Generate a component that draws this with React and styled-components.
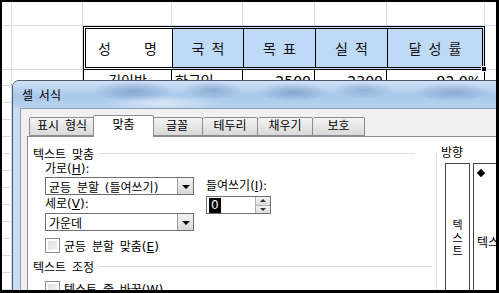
import React from "react";
import styled, { createGlobalStyle } from "styled-components";

const GlobalStyle = createGlobalStyle`
  html, body { margin: 0; padding: 0; background: #000; }
  * { box-sizing: border-box; }
`;

const FONT = `"DejaVu Sans", "Noto Sans CJK KR", sans-serif`;

// start Sheet
const Frame = styled.div`
  width: 499px;
  height: 293px;
  background: #000;
  padding: 2px 3px 3px 2px;
`;

const Sheet = styled.div`
  position: relative;
  width: 100%;
  height: 100%;
  background: #fff;
  overflow: hidden;
  font-family: ${FONT};
`;

const Grid = styled.div`
  display: grid;
  grid-template-columns: 10px 71px 89px 71px 72px 72px 98px 40px;
  grid-template-rows: 24px 44px 16px repeat(12, 17px);
`;

const Cell = styled.div`
  border-right: 1px solid #d6dce6;
  border-bottom: 1px solid #d6dce6;
`;

const HeadCell = styled.div`
  display: flex;
  align-items: center;
  justify-content: ${(p) => (p.spread ? "space-between" : "center")};
  padding: ${(p) => (p.spread ? "0 15px 0 12px" : "0")};
  background: ${(p) => (p.fill ? "#bfdaf7" : "#fff")};
  border-top: 3px double #000;
  border-bottom: 3px double #000;
  border-left: ${(p) => (p.first ? "3px double #000" : "1px solid #000")};
  border-right: ${(p) => (p.last ? "3px double #000" : "none")};
  font-size: 14px;
  letter-spacing: ${(p) => (p.spread ? "0" : "7px")};
  text-indent: ${(p) => (p.spread ? "0" : "7px")};
  color: #111;
  position: relative;
`;

const DataCell = styled.div`
  border-right: 1px solid #000;
  border-left: ${(p) => (p.first ? "1px solid #000" : "none")};
  font-size: 14px;
  line-height: 16px;
  padding: 3px 3px 0;
  text-align: ${(p) => p.align || "right"};
  white-space: nowrap;
  overflow: hidden;
`;

const Handle = styled.span`
  position: absolute;
  right: -5px;
  bottom: -5px;
  width: 6px;
  height: 6px;
  background: #000;
  border: 1px solid #fff;
`;
// end Sheet

// start Dialog
const Dialog = styled.div`
  position: absolute;
  left: 10px;
  top: 78px;
  width: 520px;
  height: 260px;
  border: 1px solid #4a5a70;
  border-radius: 7px 7px 0 0;
  background: #c9dcf0;
  display: flex;
  flex-direction: column;
  font-size: 12px;
  word-spacing: 2px;
`;

const TitleBar = styled.div`
  height: 27px;
  flex-shrink: 0;
  padding-left: 9px;
  display: flex;
  align-items: center;
  color: #000;
  border-radius: 6px 6px 0 0;
  background:
    radial-gradient(ellipse 40px 10px at 120px 10px, rgba(80,115,170,0.45), transparent),
    radial-gradient(ellipse 30px 9px at 200px 9px, rgba(80,115,170,0.4), transparent),
    radial-gradient(ellipse 35px 9px at 280px 11px, rgba(80,115,170,0.45), transparent),
    radial-gradient(ellipse 30px 8px at 350px 9px, rgba(80,115,170,0.35), transparent),
    radial-gradient(ellipse 40px 9px at 440px 11px, rgba(80,115,170,0.4), transparent),
    radial-gradient(ellipse 60px 8px at 150px 22px, rgba(255,255,255,0.5), transparent),
    linear-gradient(180deg, #cfe2f6 0%, #a9c8ea 55%, #b8d3f0 100%);
`;

const Body = styled.div`
  flex: 1;
  margin-left: 7px;
  border-left: 1px solid #8aa0b8;
  border-top: 1px solid #8aa0b8;
  background: #f0f0f0;
  padding: 6px 0 0 6px;
`;

const TabStrip = styled.div`
  display: flex;
  align-items: flex-end;
  height: 21px;
  padding-left: 2px;
  position: relative;
  z-index: 1;
`;

const Tab = styled.div`
  width: ${(p) => p.w}px;
  height: ${(p) => (p.active ? "22px" : "19px")};
  margin-bottom: ${(p) => (p.active ? "-1px" : "0")};
  margin-left: ${(p) => (p.active ? "-2px" : "0")};
  margin-right: ${(p) => (p.active ? "-2px" : "0")};
  border: 1px solid #898c95;
  border-bottom: ${(p) => (p.active ? "none" : "1px solid #898c95")};
  border-left: ${(p) => (p.noLeft ? "none" : "1px solid #898c95")};
  border-radius: 2px 2px 0 0;
  background: ${(p) =>
    p.active ? "#fff" : "linear-gradient(180deg, #f4f4f4 0%, #e6e6e6 50%, #d9d9d9 100%)"};
  text-align: center;
  line-height: ${(p) => (p.active ? "19px" : "17px")};
  color: #000;
  white-space: nowrap;
  position: relative;
  z-index: ${(p) => (p.active ? 2 : 1)};
`;

const Panel = styled.div`
  height: 200px;
  background: #fff;
  border: 1px solid #898c95;
  display: flex;
`;

const LeftCol = styled.div`
  width: 404px;
  padding: 8px 0 0 5px;
  display: flex;
  flex-direction: column;
`;

const GroupTitle = styled.div`
  display: flex;
  align-items: center;
  gap: 4px;
  height: 16px;
  width: ${(p) => p.w}px;
  margin-top: ${(p) => p.mt || 0}px;
  white-space: nowrap;
  &::after {
    content: "";
    flex: 1;
    height: 1px;
    background: #d5dfe5;
    margin-top: 1px;
  }
`;

const Indent = styled.div`
  padding-left: 12px;
  display: flex;
  flex-direction: column;
`;

const Label = styled.div`
  height: 16px;
  line-height: 16px;
  margin-top: ${(p) => p.mt || 0}px;
  white-space: nowrap;
`;

const Columns = styled.div`
  display: flex;
  gap: 12px;
`;

const Stack = styled.div`
  display: flex;
  flex-direction: column;
`;

const Combo = styled.div`
  width: 149px;
  height: 18px;
  border: 1px solid #6f6f6f;
  background: #fff;
  display: flex;
  align-items: center;
  padding-left: 3px;
  margin-top: ${(p) => p.mt || 0}px;
`;

const ComboText = styled.span`
  flex: 1;
  white-space: nowrap;
`;

const DropButton = styled.div`
  width: 16px;
  height: 16px;
  border-left: 1px solid #a0a0a0;
  background: linear-gradient(180deg, #f2f2f2, #d8d8d8);
  display: flex;
  align-items: center;
  justify-content: center;
  &::after {
    content: "";
    border-left: 4px solid transparent;
    border-right: 4px solid transparent;
    border-top: 4px solid #000;
    margin-top: 2px;
  }
`;

const Spin = styled.div`
  width: 65px;
  height: 18px;
  border: 1px solid #6f6f6f;
  background: #fff;
  display: flex;
  align-items: center;
  padding-left: 2px;
  margin-top: 2px;
`;

const Selected = styled.span`
  background: #000;
  color: #fff;
  line-height: 13px;
  padding: 0 1px;
  border: 1px solid #000;
`;

const SpinButtons = styled.div`
  margin-left: auto;
  width: 15px;
  height: 16px;
  display: flex;
  flex-direction: column;
  border-left: 1px solid #b0b0b0;
`;

const SpinArrow = styled.div`
  flex: 1;
  background: linear-gradient(180deg, #f4f4f4, #dcdcdc);
  border-bottom: ${(p) => (p.up ? "1px solid #b0b0b0" : "none")};
  display: flex;
  align-items: center;
  justify-content: center;
  &::after {
    content: "";
    border-left: 3px solid transparent;
    border-right: 3px solid transparent;
    ${(p) => (p.up ? "border-bottom: 3px solid #333;" : "border-top: 3px solid #333;")}
  }
`;

const Check = styled.div`
  display: flex;
  align-items: center;
  gap: 4px;
  height: 16px;
  margin-top: ${(p) => p.mt || 0}px;
  white-space: nowrap;
  &::before {
    content: "";
    flex-shrink: 0;
    width: 13px;
    height: 13px;
    border: 1px solid #8e8f8f;
    background: linear-gradient(135deg, #dcdcdc, #f6f6f6);
    box-shadow: inset 0 0 0 2px #fff;
  }
`;

const RightCol = styled.div`
  flex: 1;
  padding: 8px 0 0 4px;
  display: flex;
  flex-direction: column;
`;

const OrientTitle = styled.div`
  height: 16px;
  line-height: 16px;
  background: #fff;
  padding: 0 2px;
  margin-left: 3px;
  position: relative;
  z-index: 1;
  width: max-content;
`;

const OrientGroup = styled.div`
  flex: 1;
  border-left: 1px solid #d5dfe5;
  margin-top: -8px;
  padding: 10px 0 0 8px;
  display: flex;
  gap: 3px;
`;

const VertBox = styled.div`
  width: 25px;
  border: 1px solid #444;
  border-bottom: none;
  display: flex;
  flex-direction: column;
  align-items: center;
  padding-top: 55px;
  font-size: 11px;
  line-height: 13px;
`;

const DialBox = styled.div`
  flex: 1;
  border: 1px solid #444;
  border-bottom: none;
  border-right: none;
  padding: 4px 0 0 3px;
  white-space: nowrap;
`;

const Diamond = styled.div`
  width: 6px;
  height: 6px;
  background: #000;
  transform: rotate(45deg);
  margin: 2px 0 0 1px;
`;

const DialText = styled.div`
  margin-top: 57px;
`;
// end Dialog

const widths = [10, 71, 89, 71, 72, 72, 98, 40];

export default function App() {
  const emptyRow = (key) =>
    widths.map((_, i) => <Cell key={`${key}-${i}`} />);

  return (
    <>
      <GlobalStyle />
      <Frame>
        <Sheet>
          <Grid>
            {emptyRow("r0")}
            <Cell />
            <Cell />
            <HeadCell first spread>
              <span>성</span>
              <span>명</span>
            </HeadCell>
            <HeadCell fill>국적</HeadCell>
            <HeadCell fill>목표</HeadCell>
            <HeadCell fill>실적</HeadCell>
            <HeadCell fill last>
              달성률
              <Handle />
            </HeadCell>
            <Cell />
            <Cell />
            <Cell />
            <DataCell first align="center">김이박</DataCell>
            <DataCell align="left">한국인</DataCell>
            <DataCell>2500</DataCell>
            <DataCell>2300</DataCell>
            <DataCell>92.0%</DataCell>
            <Cell />
            {Array.from({ length: 12 }).map((_, r) => emptyRow(`r${r + 3}`))}
          </Grid>

          <Dialog>
            <TitleBar>셀 서식</TitleBar>
            <Body>
              <TabStrip>
                <Tab w={66}>표시 형식</Tab>
                <Tab active w={61}>맞춤</Tab>
                <Tab w={51} noLeft>글꼴</Tab>
                <Tab w={55} noLeft>테두리</Tab>
                <Tab w={55} noLeft>채우기</Tab>
                <Tab w={52} noLeft>보호</Tab>
              </TabStrip>
              <Panel>
                <LeftCol>
                  <GroupTitle w={382}>텍스트 맞춤</GroupTitle>
                  <Indent>
                    <Label>
                      가로(<u>H</u>):
                    </Label>
                    <Columns>
                      <Stack>
                        <Combo>
                          <ComboText>균등 분할 (들여쓰기)</ComboText>
                          <DropButton />
                        </Combo>
                        <Label mt={1}>
                          세로(<u>V</u>):
                        </Label>
                        <Combo mt={1}>
                          <ComboText>가운데</ComboText>
                          <DropButton />
                        </Combo>
                      </Stack>
                      <Stack>
                        <Label mt={1}>
                          들여쓰기(<u>I</u>):
                        </Label>
                        <Spin>
                          <Selected>0</Selected>
                          <SpinButtons>
                            <SpinArrow up />
                            <SpinArrow />
                          </SpinButtons>
                        </Spin>
                      </Stack>
                    </Columns>
                    <Check mt={6}>
                      <span>
                        균등 분할 맞춤(<u>E</u>)
                      </span>
                    </Check>
                  </Indent>
                  <GroupTitle w={399} mt={5}>텍스트 조정</GroupTitle>
                  <Indent>
                    <Check mt={6}>
                      <span>
                        텍스트 줄 바꿈(<u>W</u>)
                      </span>
                    </Check>
                  </Indent>
                </LeftCol>
                <RightCol>
                  <OrientTitle>방향</OrientTitle>
                  <OrientGroup>
                    <VertBox>
                      <span>텍</span>
                      <span>스</span>
                      <span>트</span>
                    </VertBox>
                    <DialBox>
                      <Diamond />
                      <DialText>텍스트</DialText>
                    </DialBox>
                  </OrientGroup>
                </RightCol>
              </Panel>
            </Body>
          </Dialog>
        </Sheet>
      </Frame>
    </>
  );
}
